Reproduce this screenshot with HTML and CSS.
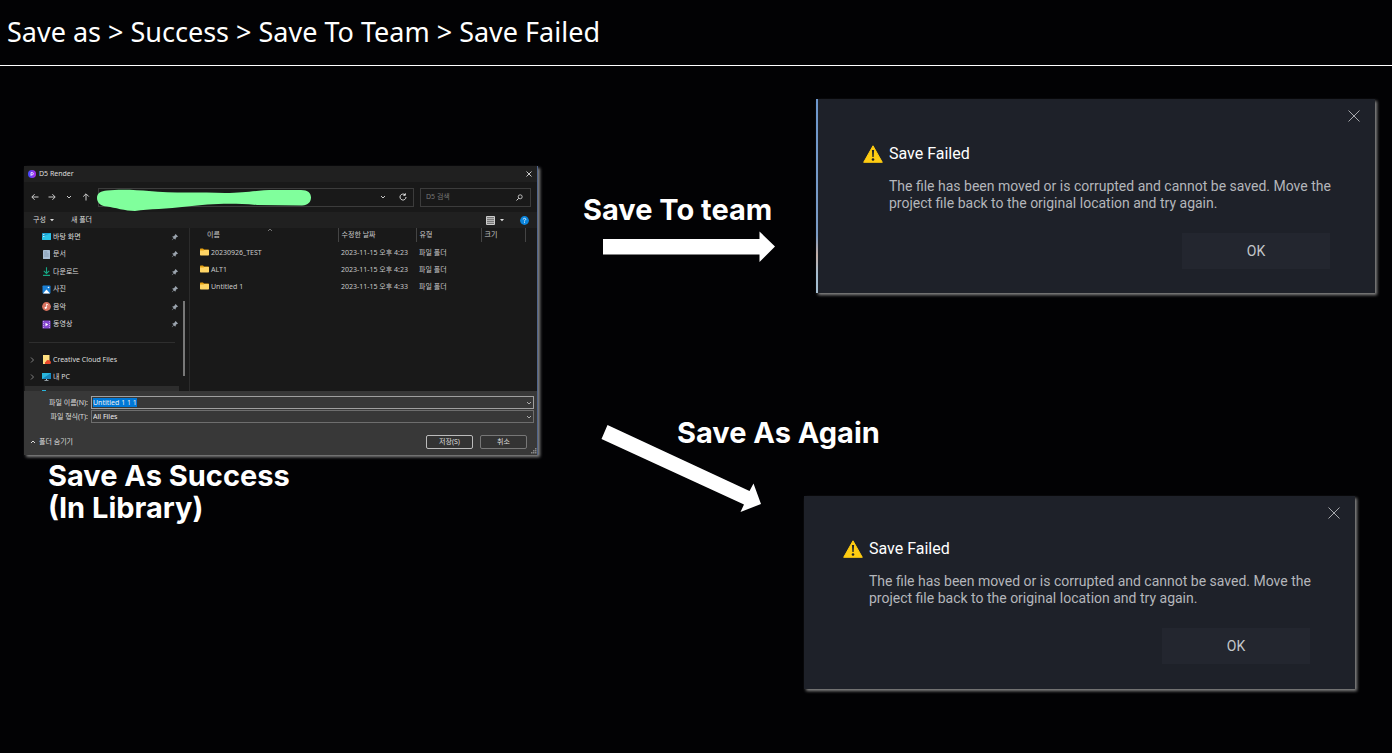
FILE: index.html
```html
<!DOCTYPE html>
<html lang="en">
<head>
    <meta charset="UTF-8">
    <meta name="viewport" content="width=device-width, initial-scale=1.0">
    <title>Save Failed</title>
    <link rel="stylesheet" href="styles.css">
</head>
<body>
    <!-- shared icons -->
    <svg class="defs" width="0" height="0">
        <symbol id="close" viewBox="0 0 12 12"><path d="M.5 .5 11.5 11.5M11.5 .5 .5 11.5" fill="none" stroke="currentColor"/></symbol>
        <symbol id="close-small" viewBox="0 0 6 6"><path d="M.5 .5 5.500 5.500M5.500 .5 .5 5.500" fill="none" stroke="currentColor" stroke-width=".9"/></symbol>
        <symbol id="down" viewBox="0 0 6 6"><path d="M1 2l2 2 2-2" fill="none" stroke="currentColor" stroke-width=".9"/></symbol>
        <symbol id="right" viewBox="0 0 6 6"><path d="M2 .5l2.500 2.500L2 5.500" fill="none" stroke="currentColor" stroke-width=".8"/></symbol>
        <symbol id="caret" viewBox="0 0 6 6"><path d="M1 2h4L3 4.300z" fill="currentColor"/></symbol>
        <symbol id="pin" viewBox="0 0 8 8"><path d="M4.600 1 7 3.400 6.300 4 5.900 4 4.800 5.100 4.700 6.300 4.100 6.600 2.900 5.400 1 7.200 .8 7 2.600 5.100 1.400 3.900 1.700 3.300 2.900 3.200 4 2.100 4 1.700z" fill="#9aa3ad"/></symbol>
        <symbol id="folder" viewBox="0 0 9 8"><path d="M0 1.200Q0 .5 .7 .5H3l1 1h4.300q.7 0 .7.700V4H0z" fill="#e8a211"/><path d="M0 2.500h3.500l.8-.6h4q.7 0 .7.600v4.300q0 .7-.7.700H.7Q0 7.500 0 6.800z" fill="#ffd566"/></symbol>
        <symbol id="warning" viewBox="0 0 20 18"><path d="M10 .8 19.300 17.300H.7z" fill="#ffcc12" stroke="#ffcc12" stroke-linejoin="round"/><path d="M8.900 5h2.200l-.5 7H9.400z" fill="#1f222a"/><circle cx="10" cy="14.500" r="1.300" fill="#1f222a"/></symbol>
    </svg>

    <header class="header">
        <h1>Save as &gt; Success &gt; Save To Team &gt; Save Failed</h1>
    </header>

    <main class="board">
        <section class="explorer">
            <div class="titlebar">
                <svg class="logo" viewBox="0 0 8 8"><defs><linearGradient id="lg" x2="1"><stop stop-color="#3d4bff"/><stop offset="1" stop-color="#b22be8"/></linearGradient></defs><circle cx="4" cy="4" r="4" fill="url(#lg)"/><path d="M3 5.800V2.600h1.200q1.200 0 1.200 1.100T4.200 4.800H3" fill="none" stroke="#fff" stroke-width=".8"/></svg>
                <span>D5 Render</span>
                <button class="icon-btn" aria-label="Close"><svg width="6" height="6"><use href="#close-small"/></svg></button>
            </div>

            <div class="nav">
                <div class="nav-arrows">
                    <svg viewBox="0 0 8 8"><path d="M7.500 4H1M3.600 1.200.8 4l2.800 2.800"/></svg>
                    <svg viewBox="0 0 8 8"><path d="M.5 4H7M4.400 1.200 7.200 4 4.400 6.800"/></svg>
                    <svg viewBox="0 0 8 8"><path d="M2 3l2 2 2-2"/></svg>
                    <svg viewBox="0 0 8 8"><path d="M4 7.500V1M1.200 3.600 4 .8l2.800 2.800"/></svg>
                </div>
                <div class="address">
                    <svg class="scribble" viewBox="0 0 214 22"><path d="M0 9C0 4 4 2 10 1.500C22 0 40 .8 52 2C75 4.500 105 3 128 4C150 3.800 160 1 178 1H204C211 1 214 4 214 8.500C214 13 211 16 205 16.500L160 16C130 13.500 110 15.500 90 17.500C70 20 52 20 38 22C28 22 18 18.500 10 17.500C4 17 0 14 0 9Z" fill="#80ff9c"/></svg>
                    <svg width="6" height="6"><use href="#down"/></svg>
                    <svg width="8" height="8" viewBox="0 0 8 8"><path d="M7 4a3 3 0 1 1-1-2.200M6.300 .3V2.300H4.300" fill="none" stroke="currentColor"/></svg>
                </div>
                <div class="search">
                    <input type="text" placeholder="D5 검색" aria-label="D5 검색">
                    <svg width="7" height="7" viewBox="0 0 7 7"><circle cx="4.200" cy="2.800" r="2" fill="none" stroke="currentColor" stroke-width=".8"/><path d="M2.700 4.300.5 6.500" stroke="currentColor"/></svg>
                </div>
            </div>

            <div class="toolbar">
                <button class="text-btn">구성 <svg width="6" height="6"><use href="#caret"/></svg></button>
                <button class="text-btn">새 폴더</button>
                <span class="spacer"></span>
                <svg width="9" height="9" viewBox="0 0 9 9"><path d="M.5 .5h8v8h-8z" fill="#777" stroke="#ccc"/><path d="M1 2.500h7M1 4.500h7M1 6.500h7" stroke="#ccc" stroke-width=".7"/></svg>
                <svg class="view-caret" width="6" height="6"><use href="#caret"/></svg>
                <svg width="9" height="9" viewBox="0 0 9 9"><circle cx="4.500" cy="4.500" r="4.400" fill="#0a84dc"/><path d="M3.200 3.500Q3.300 2.300 4.500 2.300T5.800 3.400Q5.700 4.100 4.500 4.700V5.500M4.500 6.200v.9" fill="none" stroke="#fff" stroke-width=".8"/></svg>
            </div>

            <div class="content">
                <nav class="sidebar">
                    <ul class="places">
                        <li><svg viewBox="0 0 9 9"><rect y="1" width="9" height="7" rx=".7" fill="#1c9fd0"/><path d="M0 5 9 1v6.300q0 .7-.7.700H.7Q0 8 0 7.300z" fill="#2bc3e6"/><path d="M1.300 2.500h1M1.300 4.500h1" stroke="#fff"/></svg>바탕 화면<svg class="pin"><use href="#pin"/></svg></li>
                        <li><svg viewBox="0 0 9 9"><rect x="1" width="7" height="9" rx=".6" fill="#a9bed3"/><path d="M2.200 2h3M2.200 4h4.500M2.200 6h4.500" stroke="#7c93ab" stroke-width=".8"/></svg>문서<svg class="pin"><use href="#pin"/></svg></li>
                        <li><svg viewBox="0 0 9 9"><path d="M4.500 .3v6M1.800 3.800l2.700 2.700 2.700-2.700M1 8.400h7" fill="none" stroke="#17a583" stroke-width="1.100"/></svg>다운로드<svg class="pin"><use href="#pin"/></svg></li>
                        <li><svg viewBox="0 0 9 9"><rect x=".5" y=".5" width="8" height="8" rx=".8" fill="#1a7fd4"/><path d="M1 8.500 4.500 4.500 8 8.500z" fill="#fff"/><circle cx="6.500" cy="2.500" r=".8" fill="#fff"/></svg>사진<svg class="pin"><use href="#pin"/></svg></li>
                        <li><svg viewBox="0 0 9 9"><circle cx="4.500" cy="4.500" r="4.400" fill="#d9725f"/><circle cx="3.700" cy="5.800" r="1.100" fill="#fff"/><path d="M4.600 5.800V2l1.700 1" fill="none" stroke="#fff" stroke-width=".8"/></svg>음악<svg class="pin"><use href="#pin"/></svg></li>
                        <li><svg viewBox="0 0 9 9"><rect x=".5" y=".5" width="8" height="8" rx=".6" fill="#8547cf"/><path d="M1.500 1v7M7.500 1v7" stroke="#d0b0f5" stroke-width=".8" stroke-dasharray="1 1"/><path d="M3.500 2.700v3.600l2.700-1.800z" fill="#fff"/></svg>동영상<svg class="pin"><use href="#pin"/></svg></li>
                    </ul>
                    <ul class="drives">
                        <li><svg class="expand"><use href="#right"/></svg><svg viewBox="0 0 9 9"><path d="M1 0h6.500v9H1z" fill="#ffdf80"/><path d="M3 9q-.8-2 1-2.500Q5 4.500 7 5.300 9 5.500 9 7.500 9 9 7.500 9z" fill="#e8472b"/></svg>Creative Cloud Files</li>
                        <li><svg class="expand"><use href="#right"/></svg><svg viewBox="0 0 9 9"><path d="M0 1h9v6H0z" fill="#29b5dc"/><path d="M9 1v6H0z" fill="#1687bd"/><path d="M4 7h1v1h1.500v.8h-4V8H4z" fill="#b5c3cc"/></svg>내 PC</li>
                    </ul>
                    <div class="next-item"><span></span></div>
                    <div class="scrollbar"></div>
                </nav>

                <table class="files">
                    <thead>
                        <tr><th class="name">이름 <svg class="sort" width="6" height="4" viewBox="0 0 6 4"><path d="M1 3l2-2 2 2" fill="none" stroke="#999" stroke-width=".7"/></svg></th><th class="date">수정한 날짜</th><th class="type">유형</th><th class="size">크기</th><th class="rest"></th></tr>
                    </thead>
                    <tbody>
                        <tr><td><svg width="9" height="8"><use href="#folder"/></svg>20230926_TEST</td><td>2023-11-15 오후 4:23</td><td>파일 폴더</td><td></td><td></td></tr>
                        <tr><td><svg width="9" height="8"><use href="#folder"/></svg>ALT1</td><td>2023-11-15 오후 4:23</td><td>파일 폴더</td><td></td><td></td></tr>
                        <tr><td><svg width="9" height="8"><use href="#folder"/></svg>Untitled 1</td><td>2023-11-15 오후 4:33</td><td>파일 폴더</td><td></td><td></td></tr>
                    </tbody>
                </table>
            </div>

            <div class="save-form">
                <div class="field">
                    <label for="fileName">파일 이름(N):</label>
                    <div class="control control-active">
                        <input type="text" id="fileName" value="Untitled 1 1 1">
                        <svg width="6" height="6"><use href="#down"/></svg>
                    </div>
                </div>
                <div class="field">
                    <label for="fileType">파일 형식(T):</label>
                    <div class="control">
                        <select id="fileType"><option>All Files</option></select>
                        <svg width="6" height="6"><use href="#down"/></svg>
                    </div>
                </div>
                <div class="actions">
                    <button class="text-btn hide-btn"><svg width="6" height="6" viewBox="0 0 6 6"><path d="M1 4l2-2 2 2" fill="none" stroke="currentColor"/></svg> 폴더 숨기기</button>
                    <span class="spacer"></span>
                    <button class="btn btn-default">저장(S)</button>
                    <button class="btn">취소</button>
                </div>
                <svg class="grip" width="6" height="6" viewBox="0 0 6 6"><path d="M4 0h1.500v1.500H4zM4 2h1.500v1.500H4zM2 2h1.500v1.500H2zM4 4h1.500v1.500H4zM2 4h1.500v1.500H2zM0 4h1.500v1.500H0z" fill="#888"/></svg>
            </div>
        </section>

        <h2 class="label label-success">Save As Success<br>(In Library)</h2>
        <h2 class="label label-team">Save To team</h2>
        <h2 class="label label-again">Save As Again</h2>

        <svg class="arrow arrow-team" width="172" height="32" viewBox="0 0 172 32"><path d="M0 8h156.500V.5L172 15.500 156.500 31V23.500H0z" fill="#fff"/></svg>
        <svg class="arrow arrow-again" width="160" height="88" viewBox="0 0 160 88"><path d="M6.500 0 148.500 66 152.500 58.500 160 79 139.500 87 143 79.500 .5 14z" fill="#fff"/></svg>

        <section class="popup popup-team">
            <button class="close" aria-label="Close"><svg width="12" height="12"><use href="#close"/></svg></button>
            <h3><svg width="20" height="18"><use href="#warning"/></svg>Save Failed</h3>
            <p>The file has been moved or is corrupted and cannot be saved. Move the project file back to the original location and try again.</p>
            <button class="ok">OK</button>
        </section>

        <section class="popup popup-again">
            <button class="close" aria-label="Close"><svg width="12" height="12"><use href="#close"/></svg></button>
            <h3><svg width="20" height="18"><use href="#warning"/></svg>Save Failed</h3>
            <p>The file has been moved or is corrupted and cannot be saved. Move the project file back to the original location and try again.</p>
            <button class="ok">OK</button>
        </section>
    </main>
</body>
</html>
```
FILE: styles.css
```css
* {
    box-sizing: border-box;
}
body {
    margin: 0;
    background-color: #020204;
    color: #fff;
    font-family: Inter, "Noto Sans CJK KR", sans-serif;
}
h1, h2, h3, p, ul {
    margin: 0;
    padding: 0;
}
ul {
    list-style: none;
}
button, input, select {
    font: inherit;
    color: inherit;
    background: none;
    border: 0;
    padding: 0;
    margin: 0;
}
svg {
    display: block;
    flex: none;
}
.defs {
    position: absolute;
}
.header {
    padding: 12px 7px 13px;
    border-bottom: 1px solid #fff;
}
.header h1 {
    font: 400 27px/40px "Noto Sans", sans-serif;
}
.board {
    position: relative;
    min-height: 687px;
}
.spacer {
    flex: 1;
}

/* labels and arrows */
.label {
    position: absolute;
    font-size: 29px;
    font-weight: 700;
    line-height: 32px;
    white-space: nowrap;
}
.label-success {
    left: 48px;
    top: 394px;
}
.label-team {
    left: 583px;
    top: 128px;
}
.label-again {
    left: 677px;
    top: 351px;
}
.arrow {
    position: absolute;
}
.arrow-team {
    left: 603px;
    top: 165px;
}
.arrow-again {
    left: 601px;
    top: 359px;
}

/* save failed popups */
.popup {
    position: absolute;
    display: flex;
    flex-direction: column;
    padding: 43px 45px 25px 39px;
    background-color: #1e2129;
    box-shadow: 2px 2px 3px #888;
    font-family: Roboto, sans-serif;
}
.popup-team {
    left: 816px;
    top: 33px;
    width: 559px;
    padding-top: 45px;
    padding-bottom: 24px;
    padding-left: 45px;
    border-left: 2px solid #7fa3cd;
    border-image: linear-gradient(#6d97cd, #7b9cc6 70%, #c3aea6 80%, #a5bdd0 90%) 1;
}
.popup-again {
    left: 804px;
    top: 430px;
    width: 551px;
}
.popup h3 {
    display: flex;
    align-items: center;
    gap: 6px;
    font-size: 16px;
    font-weight: 400;
    line-height: 20px;
}
.popup p {
    margin: 14px -8px 21px 26px;
    color: #b4b6bb;
    font-size: 14px;
    line-height: 17px;
}
.ok {
    align-self: flex-end;
    width: 148px;
    height: 36px;
    background-color: #23262f;
    color: #c4c6ca;
    font-size: 14px;
}
.close {
    position: absolute;
    top: 11px;
    right: 15px;
    color: #a6a8ac;
}

/* file dialog */
.explorer {
    position: absolute;
    left: 24px;
    top: 100px;
    width: 514px;
    background-color: #191919;
    color: #ddd;
    border-right: 1px solid #50658c;
    box-shadow: 2px 2px 3px #888;
    font: 7px/10px "Noto Sans", "Noto Sans CJK KR", sans-serif;
}
.titlebar {
    display: flex;
    align-items: center;
    height: 16px;
    padding: 0 5px 0 4px;
    gap: 3px;
    background-color: #202020;
}
.logo {
    width: 8px;
    height: 8px;
}
.icon-btn {
    margin-left: auto;
}
.nav {
    display: flex;
    align-items: center;
    height: 30px;
    padding: 0 6px 0 7px;
    gap: 6px;
}
.nav-arrows {
    display: flex;
    gap: 9px;
    width: 61px;
}
.nav-arrows svg {
    width: 8px;
    height: 8px;
    fill: none;
    stroke: #ccc;
}
.address {
    position: relative;
    flex: 1;
    display: flex;
    align-items: center;
    justify-content: flex-end;
    gap: 13px;
    height: 19px;
    padding-right: 6px;
    border: 1px solid #3c3c3c;
}
.scribble {
    position: absolute;
    left: -2px;
    top: 0;
    width: 214px;
    height: 22px;
}
.search {
    display: flex;
    align-items: center;
    width: 111px;
    height: 19px;
    padding: 0 7px 0 5px;
    border: 1px solid #3c3c3c;
}
.search input {
    flex: 1;
    min-width: 0;
}
.search input::placeholder {
    color: #777;
}
.toolbar {
    display: flex;
    align-items: center;
    height: 16px;
    padding: 0 8px 0 9px;
    background-color: #202020;
}
.text-btn {
    display: flex;
    align-items: center;
    gap: 3px;
    margin-right: 16px;
}
.view-caret {
    margin: 0 15px 0 4px;
}
.content {
    display: flex;
    height: 163px;
}
.sidebar {
    position: relative;
    width: 166px;
    border-right: 1px solid #2b2b2b;
    overflow: hidden;
}
.places {
    display: grid;
    grid-template-rows: repeat(6, 1fr);
    height: 105px;
    padding: 0 10px 0 18px;
}
.sidebar li {
    display: flex;
    align-items: center;
    gap: 2px;
}
.sidebar li svg {
    width: 9px;
    height: 9px;
}
.sidebar li .pin {
    width: 8px;
    height: 8px;
    margin-left: auto;
}
.drives {
    margin: 9px 14px 0 5px;
    padding: 8px 0 1px;
    border-top: 1px solid #2e2e2e;
}
.drives li {
    height: 17px;
}
.drives li .expand {
    width: 6px;
    height: 6px;
    margin-right: 5px;
    color: #999;
}
.next-item {
    height: 8px;
    margin: 0 10px 0 1px;
    padding: 4px 0 0 17px;
    background-color: #2d2d2d;
}
.next-item span {
    display: block;
    width: 4px;
    height: 1px;
    background-color: #29b5dc;
}
.scrollbar {
    position: absolute;
    right: 4px;
    top: 73px;
    width: 2px;
    height: 75px;
    background-color: #777;
}
.files {
    flex: 1;
    align-self: flex-start;
    table-layout: fixed;
    border-collapse: collapse;
    color: #c8c8c8;
    white-space: nowrap;
}
.files th {
    position: relative;
    height: 14px;
    padding: 0 3px;
    border-right: 1px solid #444;
    font-weight: 400;
    text-align: left;
}
.files td {
    height: 17px;
    padding: 0 3px;
}
.files tbody::before {
    content: "";
    display: block;
    height: 2px;
}
.files .name {
    width: 148px;
    padding-left: 17px;
}
.files .date {
    width: 78px;
}
.files .type {
    width: 65px;
}
.files .size {
    width: 44px;
}
.files .rest {
    border: 0;
}
.files td:first-child {
    padding-left: 10px;
}
.files td svg {
    display: inline-block;
    vertical-align: -1px;
    margin-right: 2px;
}
.sort {
    position: absolute;
    left: 77px;
    top: 0;
}
.save-form {
    position: relative;
    padding: 5px 3px 6px 6px;
    background-color: #383838;
}
.field {
    display: grid;
    grid-template-columns: 58px 1fr;
    align-items: center;
    gap: 3px;
    margin-bottom: 1px;
}
.field label {
    text-align: right;
}
.control {
    position: relative;
    height: 13px;
    border: 1px solid #6e6e6e;
}
.control-active {
    border-color: #a0a0a0;
}
.control input, .control select {
    display: block;
    width: 100%;
    height: 11px;
    padding: 0 1px;
    appearance: none;
    color: #eee;
}
/* selected file name */
.control input {
    background: linear-gradient(#0078d7, #0078d7) 1px 1px / 44px 9px no-repeat;
}
.control svg {
    position: absolute;
    right: 1px;
    top: 3px;
    color: #bbb;
}
.actions {
    display: flex;
    align-items: center;
    gap: 7px;
    margin-top: 12px;
    padding-right: 7px;
}
.hide-btn {
    margin: 0;
}
.btn {
    width: 47px;
    height: 14px;
    border: 1px solid #777;
    border-radius: 2px;
    background-color: #333;
    line-height: 10px;
}
.btn-default {
    border-color: #bbb;
}
.grip {
    position: absolute;
    right: 0;
    bottom: 1px;
}
```
